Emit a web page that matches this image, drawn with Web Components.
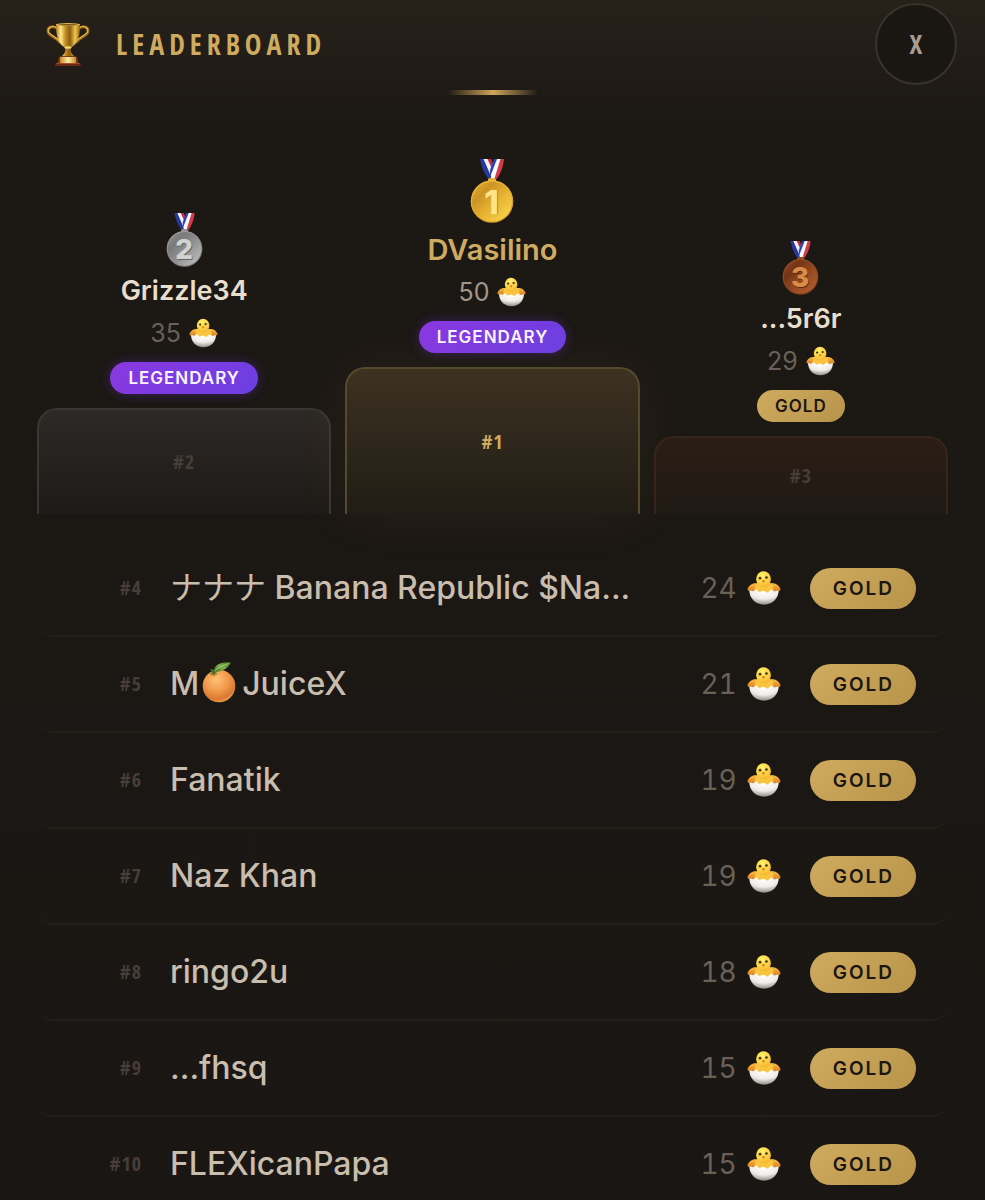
<!DOCTYPE html>
<html lang="en">
<head>
<meta charset="utf-8">
<meta name="viewport" content="width=device-width, initial-scale=1">
<title>Leaderboard</title>
<style>
  html { background: #1a1613; }
  body {
    margin: 0; font-family: Inter, "Noto Sans CJK JP", sans-serif; color: #c9bdae;
    --display: "Liberation Sans Narrow", "Open Sans Condensed", "DejaVu Sans Condensed", "Liberation Mono", monospace;
  }
  .kana { font-weight: 400; }
</style>
</head>
<body>
<leader-board>
  <board-header slot="header">Leaderboard</board-header>
  <podium-place slot="podium" place="2" name="Grizzle34" score="35" tier="legendary"></podium-place>
  <podium-place slot="podium" place="1" name="DVasilino" score="50" tier="legendary"></podium-place>
  <podium-place slot="podium" place="3" name="...5r6r" score="29" tier="gold"></podium-place>
  <rank-row rank="4" score="24" tier="gold"><span class="kana" lang="ja">ナナナ</span> Banana Republic $Na...</rank-row>
  <rank-row rank="5" score="21" tier="gold">M<emoji-icon name="orange"></emoji-icon>JuiceX</rank-row>
  <rank-row rank="6" score="19" tier="gold">Fanatik</rank-row>
  <rank-row rank="7" score="19" tier="gold">Naz Khan</rank-row>
  <rank-row rank="8" score="18" tier="gold">ringo2u</rank-row>
  <rank-row rank="9" score="15" tier="gold">...fhsq</rank-row>
  <rank-row rank="10" score="15" tier="gold">FLEXicanPapa</rank-row>
</leader-board>

<script>
const define = (tag, render) => customElements.define(tag, class extends HTMLElement {
  connectedCallback() {
    if (this.shadowRoot) return;
    this.attachShadow({ mode: 'open' }).innerHTML = render(this);
  }
});

const medal = (n, light, mid, dark, digit, edge) => `
<svg viewBox="0 0 44 64" aria-hidden="true">
  <defs>
    <radialGradient id="rim" cx=".42" cy=".3" r=".8"><stop offset="0" stop-color="${light}"/><stop offset=".55" stop-color="${mid}"/><stop offset="1" stop-color="${dark}"/></radialGradient>
    <linearGradient id="face" x1="0" y1="0" x2="1" y2="1"><stop offset="0" stop-color="${mid}"/><stop offset=".28" stop-color="${dark}"/><stop offset=".55" stop-color="${mid}"/><stop offset=".85" stop-color="${light}"/><stop offset="1" stop-color="${mid}"/></linearGradient>
  </defs>
  <path d="M10 0h5l7.500 14 0 7h-3.500Q12 12 10 0z" fill="#27389b"/>
  <path d="M13.500 0h5l5.500 11.500-2 8z" fill="#f1f1fa"/>
  <path d="M17.500 0h3.500l3.500 8-1.500 4z" fill="#c52d38"/>
  <path d="M34 0h-4.500l-7.500 15v6h4Q33 12 34 0z" fill="#d13d46"/>
  <path d="M30.500 0H26l-5 14v7h3z" fill="#f8f8ff"/>
  <path d="M27 0h-3l-4 11v7z" fill="#2b43b5"/>
  <rect x="18" y="19" width="8" height="5" rx="2" fill="${mid}"/>
  <circle cx="22" cy="42.500" r="21.300" fill="url(#rim)"/>
  <circle cx="22" cy="42.500" r="20" fill="url(#face)"/>
  <text x="22.300" y="55.300" text-anchor="middle" font-family="Inter, sans-serif" font-weight="800" font-size="33" fill="${edge}">${n}</text>
  <text x="21.500" y="54.500" text-anchor="middle" font-family="Inter, sans-serif" font-weight="800" font-size="33" fill="${digit}">${n}</text>
</svg>`;

const icons = {
  medal1: medal(1, '#f5ce46', '#e6b232', '#cd9426', '#ffe488', '#a87518'),
  medal2: medal(2, '#b4b4b4', '#929292', '#7a7a7a', '#d2d2d2', '#666'),
  medal3: medal(3, '#ab5a2c', '#934920', '#753415', '#d98c48', '#642b10'),
  trophy: `
<svg viewBox="0 0 44 44" aria-hidden="true">
  <defs>
    <linearGradient id="cup"><stop offset="0" stop-color="#b47a18"/><stop offset=".2" stop-color="#ffe98c"/><stop offset=".4" stop-color="#c18a22"/><stop offset=".58" stop-color="#8d5c10"/><stop offset=".8" stop-color="#edc750"/><stop offset="1" stop-color="#98640f"/></linearGradient>
    <linearGradient id="plate"><stop offset="0" stop-color="#bf8a2c"/><stop offset=".5" stop-color="#fff0a0"/><stop offset="1" stop-color="#c38b2c"/></linearGradient>
  </defs>
  <g fill="none" stroke-linecap="round">
    <path d="M11 6.500C7 3.500 1.500 5 2 9.500c.5 4.500 7 5 11.500 10.500M33 6.500c4-3 9.500-1.500 9 3-.5 4.500-7 5-11.500 10.500" stroke="#8f6118" stroke-width="2.800"/>
    <path d="M11 6C7 3 1.800 4.700 2.200 9c.5 4 7 5 11.300 10M33 6c4-3 9.200-1.300 8.800 3-.5 4-7 5-11.300 10" stroke="#e0b44a" stroke-width="1.300"/>
  </g>
  <path d="M10 2h24c.2 11-2 20-9 23.500-.8 2.500-.5 5.500 3.500 9h-13c4-3.500 4.300-6.500 3.500-9C12 22 9.800 13 10 2z" fill="url(#cup)"/>
  <ellipse cx="22" cy="2.500" rx="12" ry="1.500" fill="#e4bc56"/>
  <ellipse cx="22" cy="2.800" rx="10" ry=".8" fill="#78500f"/>
  <ellipse cx="22" cy="25.500" rx="3.600" ry="1.200" fill="#f6d770"/>
  <path d="M13 34.500h18l1.500 7h-21z" fill="#7c3216"/>
  <rect x="14" y="35" width="16" height="6" fill="url(#plate)"/>
  <path d="M10.500 41h23l2 3h-27z" fill="#6c2613"/>
  <path d="M10.500 41h23l.4.8H10z" fill="#b05a30"/>
</svg>`,
  chick: `
<svg viewBox="0 0 36 36" aria-hidden="true">
  <defs>
    <radialGradient id="fur" cx=".42" cy=".25" r=".85"><stop offset="0" stop-color="#fff06a"/><stop offset=".6" stop-color="#fbd040"/><stop offset="1" stop-color="#f0a832"/></radialGradient>
    <radialGradient id="shell" cx=".5" cy=".15" r=".85"><stop offset="0" stop-color="#fff"/><stop offset=".55" stop-color="#efeeea"/><stop offset="1" stop-color="#8f8c86"/></radialGradient>
    <linearGradient id="wing" x2="0" y2="1"><stop offset="0" stop-color="#fbbd3e"/><stop offset="1" stop-color="#cf7220"/></linearGradient>
  </defs>
  <path d="M10.500 13C5 12.500 2 15.500.6 19c-.4 1.600 1 2.400 2 1.800.3 1.700 2 2.200 2.900 1.200.9 1.600 2.500 1.400 3.300 0h18.400c.8 1.400 2.400 1.600 3.300 0 .9 1 2.600.5 2.900-1.200 1 .6 2.400-.2 2-1.800C34 15.500 31 12.500 25.500 13z" fill="url(#wing)"/>
  <path d="M9 14c4-2 14-2 18 0l1.500 8L18 26 7.500 22z" fill="#fbc440"/>
  <ellipse cx="17.500" cy="8.800" rx="7.800" ry="8.600" fill="url(#fur)"/>
  <path d="M2.500 20.500l4.500 1 2.700-2.200 3.300 2.900 4.700-1.200 3.800 2 4.200-3.400 3 2.200 4.800-1.300C33.500 29 27 35.700 18 35.700S2.500 29 2.500 20.500z" fill="url(#shell)"/>
  <circle cx="13.800" cy="7.600" r="1.400" fill="#3a381c"/>
  <circle cx="20.600" cy="6.900" r="1.400" fill="#3a381c"/>
  <path d="M15.800 10.200q1.600-1.500 3.400-.3-.5 2.500-1.600 2.600-1.100 0-1.800-2.300z" fill="#e0862a"/>
</svg>`,
  orange: `
<svg viewBox="0 0 34 42" aria-hidden="true">
  <defs>
    <radialGradient id="peel" cx=".42" cy=".3" r=".72"><stop offset="0" stop-color="#ffc277"/><stop offset=".5" stop-color="#f19a4c"/><stop offset=".85" stop-color="#d97832"/><stop offset="1" stop-color="#f0a850"/></radialGradient>
    <linearGradient id="leaf" y1="1" x2="1" y2="0"><stop offset="0" stop-color="#2f6d1e"/><stop offset=".5" stop-color="#7fae4c"/><stop offset="1" stop-color="#38731f"/></linearGradient>
  </defs>
  <circle cx="17" cy="25" r="16.300" fill="url(#peel)"/>
  <ellipse cx="11.500" cy="13" rx="4" ry="1.800" fill="#c77a1d" opacity=".55"/>
  <path d="M8 8.500l2.200 2.500-1.700 2.500 2.500-.7 1 3 .8-3.500 2.700.2-2.500-1.800-3-2.700z" fill="#427322"/>
  <path d="M11.500 11C12.500 4 18 .4 29 1.600c-3 5.500-8 9.500-17.500 9.400z" fill="url(#leaf)"/>
  <path d="M12.500 10C17 6 21 4 27 2.500" fill="none" stroke="#c4dd88" stroke-width=".7"/>
</svg>`
};

define('emoji-icon', el => `
<style>
  :host { display: inline-block; flex: none; width: var(--icon-w, 34px); height: var(--icon-h, 34px); }
  :host([name="orange"]) { width: 34px; height: 42px; margin: 0 6px 0 3px; vertical-align: -8px; }
  svg { display: block; width: 100%; height: 100%; }
</style>${icons[el.getAttribute('name')]}`);

define('tier-badge', el => `
<style>
  :host {
    display: inline-flex; align-items: center; justify-content: center; box-sizing: border-box; flex: none;
    height: 32px; padding: 0 18px 1px; border-radius: 20px;
    font-size: 17px; line-height: 20px; font-weight: 600; letter-spacing: 1px; text-transform: uppercase;
  }
  :host([tier="gold"]) { color: #1b1610; background: linear-gradient(135deg, #cfab60, #b8944a); }
  :host([tier="legendary"]) { color: #f8f3ff; background: linear-gradient(135deg, #8a38e0, #6c3fe2); box-shadow: 0 0 12px #7c3aed55; }
  :host([size="large"]) { height: 41px; padding: 1px 22px 0 23px; border-radius: 21px; font-size: 19px; letter-spacing: 2px; }
</style>${el.getAttribute('tier')}`);

define('board-header', () => `
<style>
  :host { display: block; }
  header { display: flex; align-items: center; padding: 3px 28px 5px 46px; }
  emoji-icon { --icon-w: 44px; --icon-h: 44px; margin-right: 26px; }
  h1 { margin: 0; flex: 1; font: 700 28px/36px var(--display); letter-spacing: 5px; text-transform: uppercase; color: #cfab60; }
  button {
    width: 82px; height: 82px; padding: 0; border: 2px solid #38332c; border-radius: 50%;
    background: #1a1712; color: #a89d91; font: 400 27px/36px var(--display);
  }
  .accent { width: 90px; height: 5px; margin: 0 auto; border-radius: 3px; background: linear-gradient(90deg, transparent, #cfa558, transparent); }
</style>
<header>
  <emoji-icon name="trophy"></emoji-icon>
  <h1><slot></slot></h1>
  <button type="button" aria-label="Close">X</button>
</header>
<div class="accent"></div>`);

define('podium-place', el => {
  const a = n => el.getAttribute(n);
  return `
<style>
  :host {
    display: flex; flex-direction: column; align-items: center; min-width: 0;
    --block: 106px; --line: #3a3632; --top: #2d2926; --end: #1e1a17; --ink: #463e37; --name: #e8dece; --score: #696057;
    --icon-w: 37px; --icon-h: 54px;
  }
  :host([place="1"]) { --block: 147px; --line: #574a2c; --top: #3c3222; --end: #211c15; --ink: #cfab60; --name: #cfab60; --score: #a0968a; --icon-w: 44px; --icon-h: 64px; }
  :host([place="3"]) { --block: 78px; --line: #38251a; --top: #2b1e15; --end: #1f1914; }
  .name { margin-top: 6px; font-size: 27px; line-height: 36px; font-weight: 600; color: var(--name); }
  :host([place="1"]) .name { margin-top: 9px; font-size: 29px; }
  .score { display: flex; align-items: center; gap: 8px; height: 36px; margin: 6px 0 11px; font-size: 25px; line-height: 36px; color: var(--score); }
  .score emoji-icon { --icon-w: 29px; --icon-h: 30px; }
  .block {
    box-sizing: border-box; width: 100%; height: var(--block); margin-top: 14px;
    display: flex; align-items: center; justify-content: center;
    border: 2px solid var(--line); border-bottom: 0; border-radius: 20px 20px 0 0;
    background: linear-gradient(var(--top), var(--end));
    color: var(--ink); font: 400 20px/24px var(--display); letter-spacing: 1px;
  }
  :host([place="1"]) .block { box-shadow: 0 0 56px #cfab6012; font-weight: 700; }
</style>
<emoji-icon name="medal${a('place')}"></emoji-icon>
<div class="name">${a('name')}</div>
<div class="score"><span>${a('score')}</span><emoji-icon name="chick"></emoji-icon></div>
<tier-badge tier="${a('tier')}"></tier-badge>
<div class="block">#${a('place')}</div>`;
});

define('rank-row', el => {
  const a = n => el.getAttribute(n);
  return `
<style>
  :host {
    box-sizing: border-box; height: 96px; padding: 0 32px; display: flex; align-items: center;
    border-bottom: 2px solid #221e1a; border-radius: 16px;
  }
  .rank { flex: none; width: 73px; margin-right: 28px; text-align: right; color: #463e37; font: 400 20px/24px var(--display); letter-spacing: 1px; }
  .name { flex: 1; min-width: 0; overflow: hidden; white-space: nowrap; text-overflow: ellipsis; font-size: 32px; line-height: 48px; font-weight: 500; }
  .score { display: flex; align-items: center; gap: 10px; margin: 0 29px 0 28px; font-size: 28px; line-height: 36px; font-variant-numeric: tabular-nums; color: #696057; }
</style>
<span class="rank">#${a('rank')}</span>
<span class="name"><slot></slot></span>
<span class="score">${a('score')}<emoji-icon name="chick"></emoji-icon></span>
<tier-badge size="large" tier="${a('tier')}"></tier-badge>`;
});

define('leader-board', () => `
<style>
  :host { display: block; height: 100vh; overflow: hidden auto; scrollbar-width: none; background: linear-gradient(#27211a, #1c1814 120px, #1a1613); }
  .podium { display: grid; grid-template-columns: repeat(3, minmax(0, 1fr)); align-items: end; gap: 14px; padding: 64px 37px 0; }
  .list { display: flex; flex-direction: column; padding: 27px 37px 0; }
</style>
<slot name="header"></slot>
<section class="podium" aria-label="Top three"><slot name="podium"></slot></section>
<section class="list" aria-label="Rankings"><slot></slot></section>`);
</script>
</body>
</html>
